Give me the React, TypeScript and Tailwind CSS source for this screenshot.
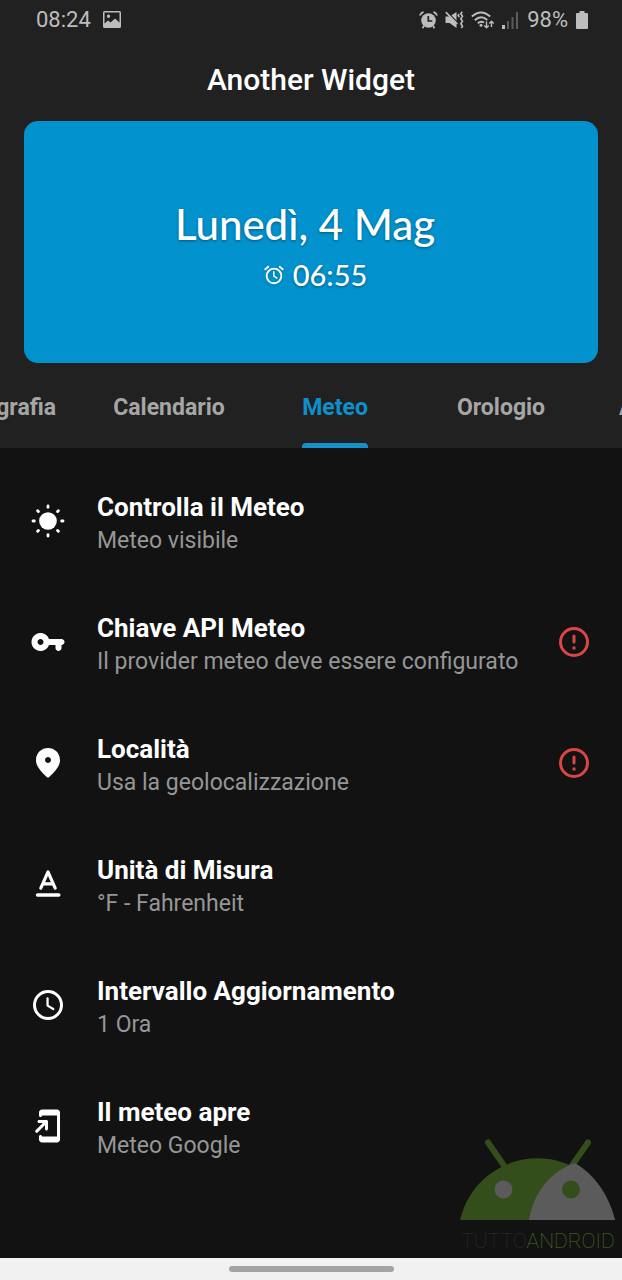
import { useState } from 'react'
import type { ReactNode } from 'react'
import clsx from 'clsx'

type Setting = {
  id: string
  title: string
  subtitle: string
  icon: ReactNode
  hasError?: boolean
}

const tabs = ['Tipografia', 'Calendario', 'Meteo', 'Orologio', 'Avanzate']

const settings: Setting[] = [
  { id: 'show', title: 'Controlla il Meteo', subtitle: 'Meteo visibile', icon: <SunIcon /> },
  {
    id: 'key',
    title: 'Chiave API Meteo',
    subtitle: 'Il provider meteo deve essere configurato',
    icon: <KeyIcon />,
    hasError: true,
  },
  {
    id: 'location',
    title: 'Località',
    subtitle: 'Usa la geolocalizzazione',
    icon: <PinIcon />,
    hasError: true,
  },
  { id: 'unit', title: 'Unità di Misura', subtitle: '°F - Fahrenheit', icon: <TextIcon /> },
  { id: 'interval', title: 'Intervallo Aggiornamento', subtitle: '1 Ora', icon: <ClockIcon /> },
  { id: 'app', title: 'Il meteo apre', subtitle: 'Meteo Google', icon: <OpenAppIcon /> },
]

function SunIcon() {
  return (
    <svg viewBox="0 0 24 24" className="size-9" fill="currentColor" aria-hidden="true">
      <circle cx="12" cy="12" r="5.9" />
      <g stroke="currentColor" strokeWidth="1.9" strokeLinecap="round">
        <path d="M12 2v.9M12 21.1v.9M2 12h.9M21.1 12h.9M5.1 5.1l.5.5M18.4 18.4l.5.5M5.1 18.9l.5-.5M18.4 5.6l.5-.5" />
      </g>
    </svg>
  )
}

function KeyIcon() {
  return (
    <svg viewBox="0 0 24 24" className="size-9" fill="currentColor" aria-hidden="true">
      <path d="M12.65 10C11.7 7.31 8.9 5.5 5.77 6.12c-2.29.46-4.15 2.29-4.63 4.58C.32 14.57 3.26 18 7 18c2.61 0 4.83-1.67 5.65-4H17v2c0 1.1.9 2 2 2s2-.9 2-2v-2c1.1 0 2-.9 2-2s-.9-2-2-2h-8.35zM7 14c-1.1 0-2-.9-2-2s.9-2 2-2 2 .9 2 2-.9 2-2 2z" />
    </svg>
  )
}

function PinIcon() {
  return (
    <svg viewBox="0 0 24 24" className="size-9" fill="currentColor" aria-hidden="true">
      <path d="M12 2c-4.2 0-8 3.22-8 8.2 0 3.18 2.45 6.92 7.34 11.23.38.33.95.33 1.33 0C17.55 17.12 20 13.38 20 10.2 20 5.22 16.2 2 12 2zm0 10c-1.1 0-2-.9-2-2s.9-2 2-2 2 .9 2 2-.9 2-2 2z" />
    </svg>
  )
}

function TextIcon() {
  return (
    <svg
      viewBox="0 0 24 24"
      className="size-9"
      fill="none"
      stroke="currentColor"
      strokeLinecap="round"
      strokeLinejoin="round"
      aria-hidden="true"
    >
      <path d="M7.2 14.8L12 4l4.8 10.8M8.8 11.9h6.4" strokeWidth="2.1" />
      <path d="M5 19.3h14.2" strokeWidth="2.3" />
    </svg>
  )
}

function ClockIcon() {
  return (
    <svg
      viewBox="0 0 24 24"
      className="size-9"
      fill="none"
      stroke="currentColor"
      strokeLinecap="round"
      strokeLinejoin="round"
      aria-hidden="true"
    >
      <circle cx="12" cy="12" r="9" strokeWidth="2" />
      <path d="M11.7 7.6v4.8l3.8 2.3" strokeWidth="1.5" />
    </svg>
  )
}

function OpenAppIcon() {
  return (
    <svg viewBox="0 0 24 24" className="size-9" fill="currentColor" aria-hidden="true">
      <path d="M18 1H8c-1.1 0-2 .9-2 2v2c0 .55.45 1 1 1s1-.45 1-1h10v14H8c0-.55-.45-1-1-1s-1 .45-1 1v2c0 1.1.9 2 2 2h10c1.1 0 2-.9 2-2V3c0-1.1-.9-2-2-2zM11 15c.55 0 1-.45 1-1V9c0-.55-.45-1-1-1H6c-.55 0-1 .45-1 1s.45 1 1 1h2.59L3.7 14.89a1 1 0 0 0 1.41 1.41L10 11.41V14c0 .55.45 1 1 1z" />
    </svg>
  )
}

function ErrorIcon() {
  return (
    <svg
      viewBox="0 0 24 24"
      className="size-9 shrink-0 text-[#dc4545]"
      fill="none"
      stroke="currentColor"
      strokeWidth="2"
      role="img"
      aria-label="Errore"
    >
      <circle cx="12" cy="12" r="9" />
      <path d="M12 8v4" strokeLinecap="round" />
      <path d="M11 15h2v2h-2z" fill="currentColor" stroke="none" />
    </svg>
  )
}

function AlarmIcon() {
  return (
    <svg
      viewBox="0 0 24 24"
      className="size-[22px] drop-shadow-sm"
      fill="none"
      stroke="currentColor"
      strokeWidth="2"
      aria-hidden="true"
    >
      <circle cx="12" cy="13" r="8" />
      <path d="M1.8 6.3l4.6-3.8M22.2 6.3l-4.6-3.8" />
      <path d="M11.8 8v5.3l3.9 2.4" strokeWidth="1.6" />
    </svg>
  )
}

function StatusBar() {
  return (
    <div className="flex h-10 items-center justify-between pr-[34px] pl-9 text-[22px] leading-6 text-[#bdbdbd]">
      <div className="flex items-center gap-3">
        <span>08:24</span>
        <svg viewBox="0 0 18 18" className="size-[18px]" fill="currentColor" aria-hidden="true">
          <path
            fillRule="evenodd"
            d="M1.5 0h15A1.5 1.5 0 0 1 18 1.5v14a1.5 1.5 0 0 1-1.5 1.5h-15A1.5 1.5 0 0 1 0 15.5v-14A1.5 1.5 0 0 1 1.5 0zM1.5 1.5v11l3.5-3 2.5 2L12 7.5l4.5 4v-10zM5.5 3.5a1.7 1.7 0 1 1 0 3.4 1.7 1.7 0 0 1 0-3.4z"
          />
        </svg>
      </div>
      <div className="flex items-center gap-[7px]">
        {/* alarm */}
        <svg viewBox="0 0 19 18" className="h-[18px] w-[19px]" aria-hidden="true">
          <circle cx="9.5" cy="9.5" r="7.3" fill="currentColor" />
          <path
            d="M.8 4.5Q2 2 4.5.9M18.2 4.5Q17 2 14.5.9M4.8 15l-1.3 2.2M14.2 15l1.3 2.2"
            fill="none"
            stroke="currentColor"
            strokeWidth="1.7"
          />
          <path d="M9.3 5v5h4" fill="none" stroke="#212121" strokeWidth="1.7" />
        </svg>
        {/* muted, vibrating */}
        <svg viewBox="0 0 19 18" className="h-[18px] w-[19px]" aria-hidden="true">
          <path d="M.5 5.5h4L11.5 1v16l-7-5h-4z" fill="currentColor" />
          <path d="M2.5 1.2L13 12" stroke="#212121" strokeWidth="1.2" />
          <path d="M.8 1.2L12.3 13" stroke="currentColor" strokeWidth="1.7" />
          <path
            d="M17.3 .8l-1.5 2 1.7 2.5-1.7 2.5 1.7 2.5-1.7 2.5 1.7 2.5-1.2 1.700M14 3l-.8 1.500 1 1.700"
            fill="none"
            stroke="currentColor"
            strokeWidth="1.6"
          />
        </svg>
        {/* wifi with traffic arrows */}
        <svg
          viewBox="0 0 24 18"
          className="h-[18px] w-6"
          fill="none"
          stroke="currentColor"
          strokeWidth="1.9"
          aria-hidden="true"
        >
          <path d="M.8 5.5Q10 -2.7 19.2 5.5M3.8 9.2Q10 3.6 16.3 9M6.8 12.3Q10 9.4 13 11.6" />
          <circle cx="10" cy="14.3" r="1.5" fill="currentColor" stroke="none" />
          <path d="M15.5 10.5v6M13.3 14.5l2.2 2.2 2.2-2.2M20.5 16v-5.5M18.3 12.5l2.2-2.2 2.2 2.2" strokeWidth="1.4" />
        </svg>
        <div className="flex items-center gap-2">
          <svg viewBox="0 0 17 18" className="h-[18px] w-[17px]" fill="currentColor" aria-hidden="true">
            <path d="M0 14h3v4H0z" />
            <path d="M5 10h2v8H5zM9.5 6h2v12h-2zM14 1h2v17h-2z" fill="#5c5c5c" />
          </svg>
          <span>98%</span>
          <svg viewBox="0 0 12 18" className="h-[18px] w-3" fill="currentColor" aria-hidden="true">
            <path d="M3.5 0h5v2h2.5a1 1 0 0 1 1 1v14a1 1 0 0 1-1 1H1a1 1 0 0 1-1-1V3a1 1 0 0 1 1-1h2.5z" />
          </svg>
        </div>
      </div>
    </div>
  )
}

function WidgetPreview() {
  return (
    <div className="mx-6 flex h-[242px] flex-col items-center justify-center gap-[6px] rounded-[14px] bg-[#0292ce] pt-[10px] font-[Lato,sans-serif] font-medium text-white">
      <p className="pr-3 text-[42px] leading-[50px] [text-shadow:0_1px_3px_rgba(0,0,0,0.4)]">Lunedì, 4 Mag</p>
      <p className="flex items-center gap-2 pl-2 text-[29px] leading-10 [text-shadow:0_1px_3px_rgba(0,0,0,0.4)]">
        <AlarmIcon />
        <span>06:55</span>
      </p>
    </div>
  )
}

function Watermark() {
  return (
    <div className="pointer-events-none absolute right-[6px] bottom-[23px] w-[156px]">
      <svg viewBox="0 0 156 82" className="w-full" aria-hidden="true">
        <path d="M28 3.5L45 28M128 3.5L111 28" stroke="#334d1b" strokeWidth="6" strokeLinecap="round" />
        <path d="M0 81A79.5 79.5 0 0 1 155 81z" fill="#334d1b" />
        <path d="M69 81C73 55 90 32 115 24Q145 42 155 81z" fill="#5b5b5b" />
        <circle cx="43.5" cy="50.5" r="9" fill="#5b5b5b" />
        <circle cx="111" cy="50.5" r="9" fill="#334d1b" />
      </svg>
      <p className="pt-1 text-center text-[21px] leading-8 font-thin text-[#4a7322]">
        <span className="text-[#2e2e2e]">TUTTO</span>ANDROID
      </p>
    </div>
  )
}

export default function App() {
  const [activeTab, setActiveTab] = useState('Meteo')

  return (
    <div className="relative flex min-h-screen flex-col overflow-hidden bg-[#121212] font-[Roboto,sans-serif]">
      <header className="bg-[#212121]">
        <StatusBar />
        <h1 className="pt-5 pb-[21px] text-center text-[30px] leading-10 font-medium text-white">Another Widget</h1>
        <WidgetPreview />

        {/* Scrolled tab strip */}
        <div role="tablist" className="flex justify-center overflow-hidden pl-12">
          {tabs.map((tab) => (
            <button
              key={tab}
              type="button"
              role="tab"
              aria-selected={tab === activeTab}
              onClick={() => setActiveTab(tab)}
              className={clsx(
                'flex w-[166px] shrink-0 flex-col items-center text-[23px] leading-[34px] font-bold',
                tab === activeTab ? 'text-[#0f8fcb]' : 'text-[#a6a6a6]'
              )}
            >
              <span className="flex flex-col pt-7">
                {tab}
                <span className={clsx('mt-[18px] h-[5px] rounded-t-sm', tab === activeTab && 'bg-[#1590cb]')} />
              </span>
            </button>
          ))}
        </div>
      </header>

      <main className="flex-1 pt-3">
        <ul>
          {settings.map((item) => (
            <li key={item.id}>
              <button type="button" className="flex h-[121px] w-full items-center gap-[31px] px-[30px] text-left text-white">
                {item.icon}
                <span className="flex flex-1 flex-col pt-[6px]">
                  <span className="text-[26px] leading-[34px] font-bold">{item.title}</span>
                  <span className="text-[23px] leading-[34px] text-[#969696]">{item.subtitle}</span>
                </span>
                {item.hasError && <ErrorIcon />}
              </button>
            </li>
          ))}
        </ul>
      </main>

      <Watermark />

      <footer className="flex h-[22px] items-center justify-center bg-[#f1f1f1]">
        <div className="h-[6px] w-[165px] rounded-full bg-[#a3a3a3]" />
      </footer>
    </div>
  )
}
